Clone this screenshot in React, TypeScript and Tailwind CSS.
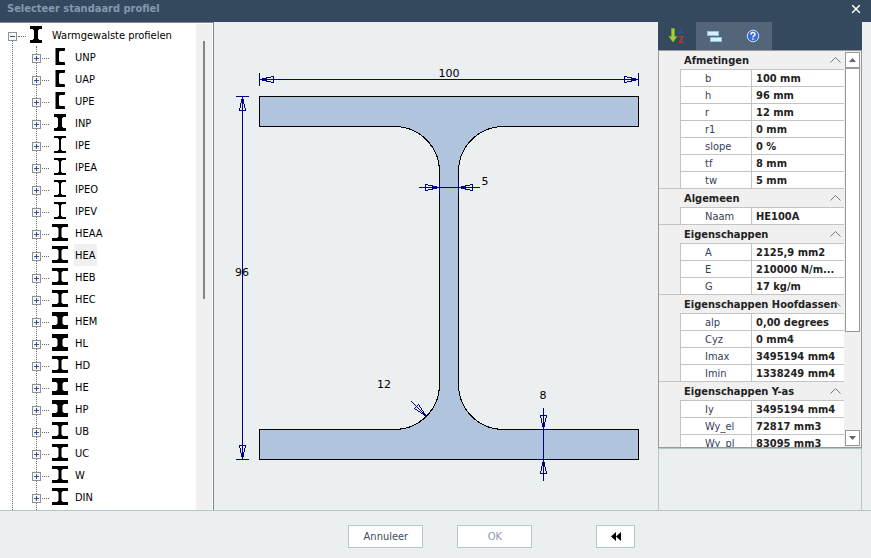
import { useState } from 'react'
import { X } from 'lucide-react'

interface Shape {
  kind: 'I' | 'U'
  width: number
  flange: number
  web: number
}

interface Profile {
  name: string
  shape: Shape
}

interface Group {
  title: string
  rows: [string, string][]
}

const channel: Shape = { kind: 'U', width: 10, flange: 2, web: 4 }
const heavyNarrow: Shape = { kind: 'I', width: 12, flange: 3, web: 4 }
const light: Shape = { kind: 'I', width: 12, flange: 2, web: 2 }
const wide: Shape = { kind: 'I', width: 16, flange: 3, web: 3 }
const wideThick: Shape = { kind: 'I', width: 16, flange: 4, web: 5 }

const profiles: Profile[] = [
  { name: 'UNP', shape: channel },
  { name: 'UAP', shape: channel },
  { name: 'UPE', shape: channel },
  { name: 'INP', shape: heavyNarrow },
  { name: 'IPE', shape: light },
  { name: 'IPEA', shape: light },
  { name: 'IPEO', shape: light },
  { name: 'IPEV', shape: light },
  { name: 'HEAA', shape: wide },
  { name: 'HEA', shape: wide },
  { name: 'HEB', shape: wide },
  { name: 'HEC', shape: wide },
  { name: 'HEM', shape: wideThick },
  { name: 'HL', shape: wideThick },
  { name: 'HD', shape: wide },
  { name: 'HE', shape: wideThick },
  { name: 'HP', shape: wideThick },
  { name: 'UB', shape: wide },
  { name: 'UC', shape: wide },
  { name: 'W', shape: wide },
  { name: 'DIN', shape: wide },
]

const groups: Group[] = [
  {
    title: 'Afmetingen',
    rows: [
      ['b', '100 mm'],
      ['h', '96 mm'],
      ['r', '12 mm'],
      ['r1', '0 mm'],
      ['slope', '0 %'],
      ['tf', '8 mm'],
      ['tw', '5 mm'],
    ],
  },
  { title: 'Algemeen', rows: [['Naam', 'HE100A']] },
  {
    title: 'Eigenschappen',
    rows: [
      ['A', '2125,9 mm2'],
      ['E', '210000 N/m...'],
      ['G', '17 kg/m'],
    ],
  },
  {
    title: 'Eigenschappen Hoofdassen',
    rows: [
      ['alp', '0,00 degrees'],
      ['Cyz', '0 mm4'],
      ['Imax', '3495194 mm4'],
      ['Imin', '1338249 mm4'],
    ],
  },
  {
    title: 'Eigenschappen Y-as',
    rows: [
      ['Iy', '3495194 mm4'],
      ['Wy_el', '72817 mm3'],
      ['Wy_pl', '83095 mm3'],
    ],
  },
]

function ProfileIcon({ shape }: { shape: Shape }) {
  const { kind, width, flange, web } = shape
  if (kind === 'U') {
    return (
      <svg className="mt-0.5 h-[17px] w-[17px] shrink-0 self-start" viewBox="0 0 17 17">
        <path d="M3.5 0H13V2.5L12 3H8L7 4V13L8 14H12L13 14.5V17H3.5Z" />
      </svg>
    )
  }
  const l = 8 - width / 2
  const r = 8 + width / 2
  const a = 8 - web / 2
  const b = 8 + web / 2
  const t = flange
  const u = 17 - flange
  return (
    <svg className="mt-0.5 h-[17px] w-[17px] shrink-0 self-start" viewBox="0 0 17 17">
      <path
        d={`M${l} 0H${r}V${t}H${b + 1.5}L${b} ${t + 1.5}V${u - 1.5}L${b + 1.5} ${u}H${r}V17H${l}V${u}H${a - 1.5}L${a} ${u - 1.5}V${t + 1.5}L${a - 1.5} ${t}H${l}Z`}
      />
    </svg>
  )
}

function Expander({ open, label }: { open?: boolean; label: string }) {
  return (
    <button type="button" aria-label={label} className="mt-0.5 flex size-[9px] shrink-0 bg-white">
      <svg className="size-[9px]" viewBox="0 0 9 9" shapeRendering="crispEdges">
        <rect x="0.5" y="0.5" width="8" height="8" fill="#f7f7f7" stroke="#919191" />
        <path d={open ? 'M2 4.5H7' : 'M2 4.5H7M4.5 2V7'} stroke="#2f52a3" />
      </svg>
    </button>
  )
}

function ProfileTree({ selected, onSelect }: { selected: string; onSelect: (name: string) => void }) {
  return (
    <nav className="flex w-[214px] shrink-0 overflow-hidden border-t border-r border-[#7f898c] bg-white pt-px">
      <div className="min-w-0 flex-1">
        <div className="flex h-[22px] items-center pl-2">
          <Expander open label="Warmgewalste profielen" />
          <span className="mt-0.5 ml-px w-2 border-t border-dotted border-[#666]" />
          <span className="ml-0.5 flex self-start">
            <ProfileIcon shape={heavyNarrow} />
          </span>
          <span className="ml-[7px] pt-0.5">Warmgewalste profielen</span>
        </div>
        <div className="-mt-[5px] ml-3 border-l border-dotted border-[#666] pt-[5px]">
          <ul className="ml-[23px] border-l border-dotted border-[#666] pb-6">
            {profiles.map(({ name, shape }) => (
              <li key={name} className="-ml-[5px] flex h-[22px] items-center">
                <Expander label={name} />
                <span className="mt-0.5 mr-[3px] ml-px w-[7px] border-t border-dotted border-[#666]" />
                <ProfileIcon shape={shape} />
                <button
                  type="button"
                  onClick={() => onSelect(name)}
                  className={`ml-[5px] h-[22px] pt-0.5 pr-0.5 pl-px ${name === selected ? 'bg-[#f0f0f0]' : ''}`}
                >
                  {name}
                </button>
              </li>
            ))}
          </ul>
        </div>
      </div>
      <div className="mr-px w-4 shrink-0 bg-[#f0f0f0] pt-[17px] pl-[7px]">
        <div className="h-[55%] w-0.5 bg-[#858585]" />
      </div>
    </nav>
  )
}

function SectionDrawing() {
  return (
    <main className="min-w-0 flex-1">
      <svg
        className="h-full w-full"
        viewBox="0 0 444 488"
        fontFamily="'DejaVu Sans', sans-serif"
        fontSize="11"
        textAnchor="middle"
      >
        <path
          shapeRendering="crispEdges"
          d="M45.5 74.5H424.5V104.5H289.5A45 45 0 0 0 244.5 149.5V362.5A45 45 0 0 0 289.5 407.5H424.5V437.5H45.5V407.5H180.5A45 45 0 0 0 225.5 362.5V149.5A45 45 0 0 0 180.5 104.5H45.5Z"
          fill="#b0c4de"
          stroke="#000"
        />
        <g stroke="#00008b" strokeLinejoin="bevel" fill="none" shapeRendering="crispEdges">
          {/* width */}
          <path d="M45.5 57.5H424.5M45.5 51V64M424.5 51V64" />
          <path d="M45.5 57.5L59.5 54.5V60.5ZM424.5 57.5L410.5 54.5V60.5Z" />
          {/* height */}
          <path d="M28.5 74.5V437.5M22 74.5H35M22 437.5H35" />
          <path d="M28.5 74.5L25.5 88.5H31.5ZM28.5 437.5L25.5 423.5H31.5Z" />
          {/* web */}
          <path d="M205 165.5H266M225.5 159V172M244.5 159V172" />
          <path d="M225.5 165.5L211.5 162.5V168.5ZM244.5 165.5L258.5 162.5V168.5Z" />
          {/* flange */}
          <path d="M329.5 386V459M323 407.5H336M323 437.5H336" />
          <path d="M329.5 407.5L326.5 393.5H332.5ZM329.5 437.5L326.5 451.5H332.5Z" />
          {/* fillet radius */}
          <path d="M197.5 379.5L212.5 394.5M212.5 394.5L200.5 386.5L204.5 382.5Z" />
        </g>
        <text x="235" y="55">100</text>
        <text x="28" y="254">96</text>
        <text x="271" y="163">5</text>
        <text x="170" y="366">12</text>
        <text x="329" y="377">8</text>
      </svg>
    </main>
  )
}

function PropertyTabs() {
  return (
    <div className="flex h-7 shrink-0 bg-[#34495e]">
      <button type="button" aria-label="Alfabetisch" className="flex w-[38px] items-center justify-center">
        <svg className="size-[18px]" viewBox="0 0 18 18">
          <path d="M3.5 1.5H6.5V9.5H9L5 15L1 9.5H3.5Z" fill="#9bd335" stroke="#79b21f" strokeWidth="0.8" />
          <text x="10.5" y="7" fontSize="7" fontWeight="bold" fill="#2f4fa8">A</text>
          <text x="10" y="16" fontSize="8" fontWeight="bold" fill="#d22a2a">Z</text>
        </svg>
      </button>
      <button type="button" aria-label="Categorie" className="flex w-[38px] items-center justify-center bg-[#546579]">
        <svg className="h-4 w-4" viewBox="0 0 16 16">
          <rect x="0.5" y="3.5" width="11" height="4" fill="#d9effa" stroke="#8fc3e0" />
          <rect x="3.5" y="9.5" width="11" height="4" fill="#d9effa" stroke="#8fc3e0" />
        </svg>
      </button>
      <button type="button" aria-label="Help" className="flex w-[38px] items-center justify-center bg-[#546579]">
        <svg className="h-4 w-4" viewBox="0 0 16 16">
          <circle cx="8" cy="8" r="5.8" fill="#3c6fd0" stroke="#cfdcf3" />
          <path d="M6 6.5C6 4 10 4 10 6.3C10 7.8 8 7.7 8 9.3M8 10.3V11.8" fill="none" stroke="#fff" strokeWidth="1.5" />
        </svg>
      </button>
    </div>
  )
}

function PropertyTable() {
  return (
    <table className="w-full table-fixed border-separate border-spacing-0 bg-[#f0f0f0] text-[#222]">
      <colgroup>
        <col className="w-[21px]" />
        <col className="w-[71px]" />
        <col />
      </colgroup>
      {groups.map((group, i) => (
        <tbody key={group.title}>
          <tr>
            <th
              colSpan={3}
              scope="colgroup"
              className={`relative pt-px pl-[25px] text-left leading-[17px] font-bold whitespace-nowrap ${i > 0 ? 'border-t border-[#c4c4c4]' : ''}`}
            >
              {group.title}
              <svg className="absolute top-1.5 right-[3px] h-1.5 w-[11px]" viewBox="0 0 11 6">
                <path d="M0.5 5.5L5.5 0.5L10.5 5.5" fill="none" stroke="#777" />
              </svg>
            </th>
          </tr>
          {group.rows.map(([name, value]) => (
            <tr key={name}>
              <td />
              <td className="border-t border-l border-[#c4c4c4] bg-white pt-px pl-6 leading-[15px] text-[#34405a]">{name}</td>
              <td className="border-t border-l border-[#c4c4c4] bg-white pt-px pl-1 leading-[15px] font-bold whitespace-nowrap">{value}</td>
            </tr>
          ))}
        </tbody>
      ))}
    </table>
  )
}

function PropertyScrollbar() {
  return (
    <div className="flex w-[17px] shrink-0 flex-col bg-[#f0f0f0] p-px">
      <button type="button" aria-label="Omhoog" className="flex h-4 shrink-0 items-center justify-center border border-[#999] bg-white">
        <svg className="h-1 w-[7px]" viewBox="0 0 7 4">
          <path d="M3.5 0L7 4H0Z" fill="#666" />
        </svg>
      </button>
      <div className="min-h-0 flex-1">
        <div className="h-[73%] border border-[#999] bg-white" />
      </div>
      <button type="button" aria-label="Omlaag" className="flex h-4 shrink-0 items-center justify-center border border-[#999] bg-white">
        <svg className="h-1 w-[7px]" viewBox="0 0 7 4">
          <path d="M0 0H7L3.5 4Z" fill="#666" />
        </svg>
      </button>
    </div>
  )
}

export default function App() {
  const [selected, setSelected] = useState('HEA')

  return (
    <div className="flex h-screen flex-col overflow-hidden bg-[#ebeff0] font-['DejaVu_Sans_Condensed','Noto_Sans',sans-serif] text-[11px] text-black">
      <header className="flex h-[22px] shrink-0 items-center justify-between bg-[#34495e] pr-2 pb-1 pl-[7px]">
        <h1 className="font-bold text-[#8299b0]">Selecteer standaard profiel</h1>
        <button type="button" aria-label="Sluiten" className="text-white">
          <X size={14} strokeWidth={2.5} />
        </button>
      </header>

      <div className="flex min-h-0 flex-1 border-b border-[#b7c6c9]">
        <ProfileTree selected={selected} onSelect={setSelected} />
        <SectionDrawing />
        <aside className="mr-[9px] flex w-[204px] shrink-0 flex-col">
          <PropertyTabs />
          <div className="flex min-h-0 flex-1 overflow-hidden border border-[#999]">
            <div className="min-w-0 flex-1">
              <PropertyTable />
            </div>
            <PropertyScrollbar />
          </div>
          <div className="h-[62px] shrink-0 border-x border-t border-[#b7c6c9]" />
        </aside>
      </div>

      <footer className="flex h-[47px] shrink-0 items-start pt-3.5 pl-[40%]">
        <button type="button" className="h-[23px] w-[75px] border border-[#b7c6c9] bg-white pt-0.5 text-[#444c58]">
          Annuleer
        </button>
        <button type="button" disabled className="ml-[34px] h-[23px] w-[75px] border border-[#b7c6c9] bg-white pt-0.5 text-[#8a9bad]">
          OK
        </button>
        <button type="button" aria-label="Terug" className="ml-16 flex h-[23px] w-[39px] items-center justify-center border border-[#b7c6c9] bg-white">
          <svg className="h-[9px] w-[10px]" viewBox="0 0 10 9">
            <path d="M5 0V9L0 4.5ZM10 0V9L5 4.5Z" />
          </svg>
        </button>
      </footer>
    </div>
  )
}
